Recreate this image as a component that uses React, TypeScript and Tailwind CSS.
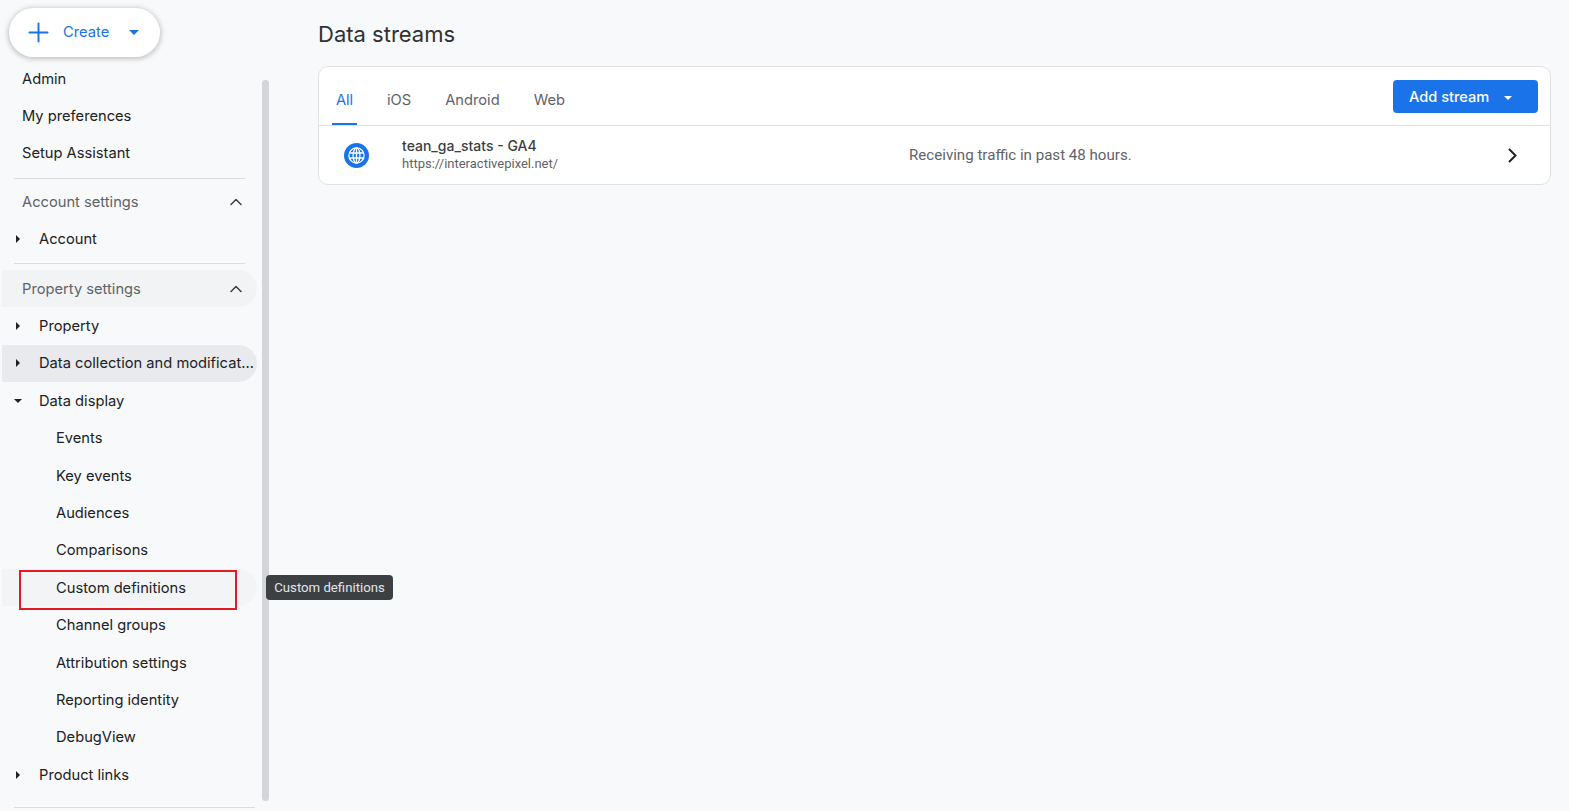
import { ChevronUp, Plus } from 'lucide-react';

const font = "[font-family:Inter,'Liberation_Sans',sans-serif]";

function CaretDown({ className }: { className: string }) {
  return (
    <svg viewBox="0 0 10 5" className={className} fill="currentColor">
      <path d="M0 0h10L5 5z" />
    </svg>
  );
}

function CaretRight() {
  return (
    <svg viewBox="0 0 4 8" className="w-[4px] h-[8px] text-[#202124]" fill="currentColor">
      <path d="M0 0l4 4-4 4z" />
    </svg>
  );
}

function GlobeBadge() {
  return (
    <svg viewBox="0 0 25 25" className="w-[25px] h-[25px] shrink-0">
      <circle cx="12.5" cy="12.5" r="12.5" fill="#1a73e8" />
      <g fill="none" stroke="#fff" strokeWidth="1.3">
        <circle cx="12.5" cy="12.5" r="7.6" />
        <ellipse cx="12.5" cy="12.5" rx="3.4" ry="7.6" />
        <path d="M5.5 10h14M5.5 15h14M12.5 5v15" />
      </g>
    </svg>
  );
}

const Divider = ({ className }: { className: string }) => (
  <div className={`h-px bg-[#dadce0] ml-[14px] ${className}`} />
);

function Row({ label, indent = 'pl-[20px]', bg = '' }: { label: string; indent?: string; bg?: string }) {
  return (
    <div className={`h-[37.4px] ml-[2px] mr-[5px] flex items-center rounded-r-full text-[14.7px] text-[#202124] whitespace-nowrap ${indent} ${bg}`}>
      {label}
    </div>
  );
}

function Expandable({ label, open = false, bg = '' }: { label: string; open?: boolean; bg?: string }) {
  return (
    <div className={`h-[37.4px] ml-[2px] mr-[5px] flex items-center rounded-r-full text-[14.7px] text-[#202124] whitespace-nowrap ${bg}`}>
      <span className="w-[37px] pl-[12px] flex items-center">
        {open ? <CaretDown className="w-[8px] h-[4px] text-[#202124]" /> : <span className="pl-[2px] flex"><CaretRight /></span>}
      </span>
      <span>{label}</span>
    </div>
  );
}

function SectionHead({ label, bg = '' }: { label: string; bg?: string }) {
  return (
    <div className={`h-[37.4px] ml-[2px] mr-[5px] pl-[20px] pr-[11px] flex items-center justify-between rounded-r-full text-[14.7px] text-[#5f6368] ${bg}`}>
      {label}
      <ChevronUp className="w-[20px] h-[20px] text-[#3c4043]" strokeWidth={1.8} />
    </div>
  );
}

const children = ['Events', 'Key events', 'Audiences', 'Comparisons'];
const moreChildren = ['Channel groups', 'Attribution settings', 'Reporting identity', 'DebugView'];
const tabs = ['iOS', 'Android', 'Web'];

export default function App() {
  return (
    <div className={`h-[811px] w-[1569px] overflow-hidden flex bg-[#f8f9fa] ${font}`}>
      <aside className="w-[318px] shrink-0 flex">
        <div className="w-[262px] shrink-0">
          <div className="pt-[8px] pl-[9px] pb-[3px]">
            <div className="w-[151px] h-[49px] bg-white rounded-full shadow-[0_1px_5px_1px_rgba(60,64,67,0.3)] flex items-center pl-[13.5px] text-[#1a73e8] text-[14.7px]">
              <Plus className="w-[31px] h-[31px] shrink-0" strokeWidth={1.5} />
              <span className="ml-[9.5px]">Create</span>
              <CaretDown className="w-[10px] h-[5px] ml-[20px]" />
            </div>
          </div>
          <Row label="Admin" />
          <Row label="My preferences" />
          <Row label="Setup Assistant" />
          <Divider className="mt-[5.5px] mb-[4.5px] mr-[17px]" />
          <SectionHead label="Account settings" />
          <Expandable label="Account" />
          <Divider className="mt-[5.5px] mb-[5.5px] mr-[17px]" />
          <SectionHead label="Property settings" bg="bg-[#f1f3f4]" />
          <Expandable label="Property" />
          <Expandable label="Data collection and modificat…" bg="bg-[#e8eaed]" />
          <Expandable label="Data display" open />
          {children.map((c) => (
            <Row key={c} label={c} indent="pl-[54px]" />
          ))}
          <div className="relative">
            <Row label="Custom definitions" indent="pl-[54px]" bg="bg-[#f3f4f5]" />
            <div className="absolute left-[19px] top-[0.5px] w-[218px] h-[40px] border-2 border-[#e01b24]" />
          </div>
          {moreChildren.map((c) => (
            <Row key={c} label={c} indent="pl-[54px]" />
          ))}
          <Expandable label="Product links" />
          <Divider className="mt-[14px] mr-[7px]" />
        </div>
        <div className="relative w-[7px]">
          <div className="mt-[80px] h-[721px] w-[7px] rounded-full bg-[#d3d5d9]" />
          <div className="absolute left-[4px] top-[575px] h-[25px] w-[127px] rounded-[4px] bg-[#3c4043] flex items-center justify-center text-[13.2px] text-[#e3e5e8] whitespace-nowrap [font-family:Roboto,sans-serif]">
            Custom definitions
          </div>
        </div>
      </aside>
      <main className="flex-1 min-w-0 pr-[18px]">
        <h1 className="h-[66px] flex items-center pt-[2px] text-[22px] text-[#303134] font-normal">Data streams</h1>
        <section className="bg-white border border-[#e0e2e6] rounded-[10px]">
          <div className="h-[59px] border-b border-[#e0e2e6] flex justify-between pl-[13px] pr-[12px]">
            <div className="flex text-[14.7px] text-[#5f6368]">
              <div className="relative w-[25px] pt-[22px] text-center text-[#1a73e8]">
                All
                <div className="absolute left-0 right-0 bottom-[0px] h-[2px] bg-[#1a73e8]" />
              </div>
              <div className="flex gap-[34px] pl-[30px] pt-[22px]">
                {tabs.map((t) => (
                  <span key={t}>{t}</span>
                ))}
              </div>
            </div>
            <div className="pt-[13px]">
              <button type="button" className="w-[145px] h-[33px] pt-[2px] rounded-[4px] bg-[#1a73e8] text-white text-[14.6px] font-medium flex items-center pl-[16px]">
                Add stream
                <CaretDown className="w-[8px] h-[4px] ml-[15px]" />
              </button>
            </div>
          </div>
          <div className="h-[58px] flex items-center pl-[25px] pr-[33px]">
            <GlobeBadge />
            <div className="w-[540px] pl-[33px] shrink-0">
              <div className="text-[14px] leading-[18px] font-medium text-[#3c4043] -mt-[1px]">tean_ga_stats - GA4</div>
              <div className="text-[13px] leading-[17px] text-[#5f6368] [font-family:Roboto,sans-serif]">https://interactivepixel.net/</div>
            </div>
            <div className="flex-1 text-[15.1px] text-[#5f6368] [font-family:Roboto,sans-serif]">Receiving traffic in past 48 hours.</div>
            <svg viewBox="0 0 9 15" className="w-[9px] h-[15px] text-[#202124]" fill="none" stroke="currentColor" strokeWidth="2">
              <path d="M1 1l6.5 6.5L1 14" />
            </svg>
          </div>
        </section>
      </main>
    </div>
  );
}
